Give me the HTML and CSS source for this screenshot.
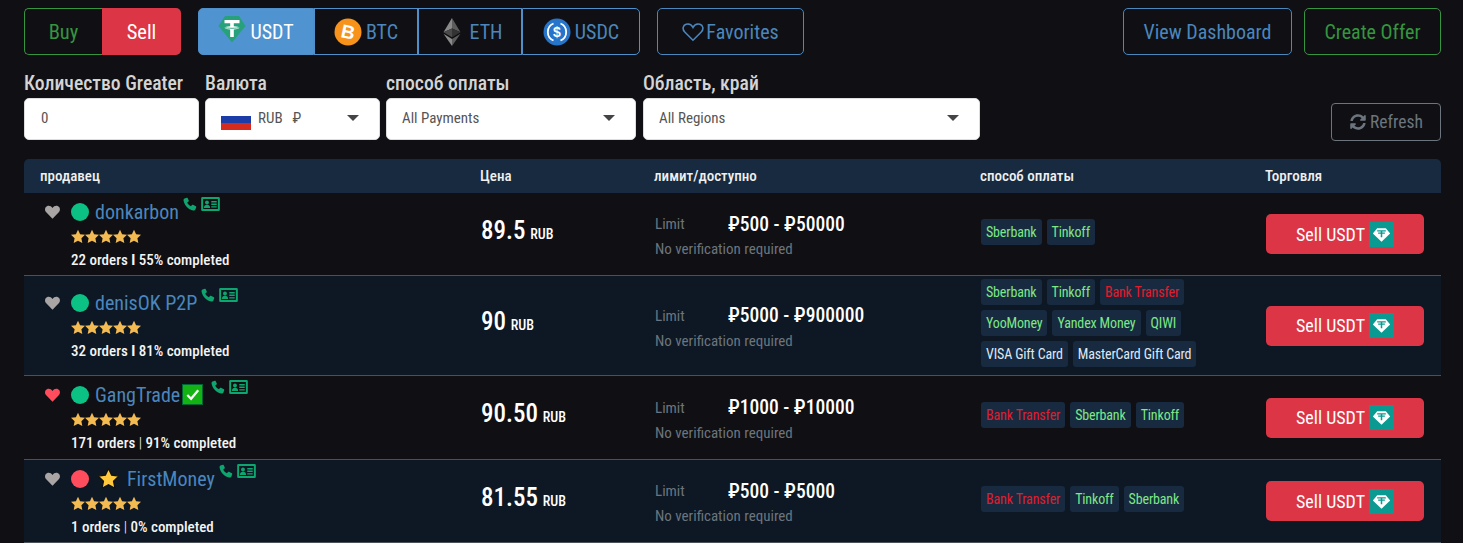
FILE: index.html
```html
<!DOCTYPE html>
<html lang="ru">
<head>
<meta charset="utf-8">
<title>P2P</title>
<link rel="stylesheet" href="styles.css">
</head>
<body>
<svg class="defs" width="0" height="0" aria-hidden="true">
  <defs>
    <symbol id="heart" viewBox="0 0 24 24"><path d="M12 22 2.600 12.400C-.2 9.500 0.500 4.800 3.700 3.300 6.500 2 9.800 2.800 12 6c2.200-3.200 5.500-4 8.300-2.700 3.200 1.500 3.900 6.200 1.100 9.100z"/></symbol>
    <symbol id="phone" viewBox="0 0 24 24"><path d="M6.600 1.200 2.700 2.600C1.100 3.200.7 4.800 1 6.600c1.800 8.600 8 14.800 16.300 16.500 1.700.3 3.200-.1 3.900-1.700l1.500-3.900c.2-.7 0-1.300-.6-1.600l-5-2.600c-.6-.3-1.200-.2-1.600.3l-2 2.400c-2.800-1.300-5-3.600-6.300-6.400l2.400-2c.5-.4.600-1 .3-1.600L7.900 1.800c-.3-.6-.8-.8-1.300-.6z"/></symbol>
    <symbol id="idcard" viewBox="0 0 24 18"><path fill-rule="evenodd" d="M1.500 0h21A1.500 1.500 0 0 1 24 1.500v15a1.500 1.500 0 0 1-1.500 1.500h-21A1.500 1.500 0 0 1 0 16.500v-15A1.500 1.500 0 0 1 1.500 0zM2.500 2.500v13h19v-13z"/><circle cx="7.500" cy="7" r="2.500"/><path d="M3.500 14c0-2.600 1.600-3.900 4-3.900s4 1.300 4 3.900zM13 5h7v2h-7zM13 8.500h7v1.800h-7zM13 11.800h7v1.800h-7z"/></symbol>
    <symbol id="star" viewBox="0 0 24 24"><path d="m12 .5 3.600 7.600 8.400 1.100-6.200 5.800 1.600 8.300L12 19.200l-7.400 4.100 1.600-8.300L0 9.200l8.400-1.100z"/></symbol>
    <symbol id="gem" viewBox="0 0 26 26"><rect width="26" height="26" fill="#0a9a92"/><path fill="#fff" d="M8.500 6.500h9L22 12l-9 8.500L4 12z"/><path fill="#0a9a92" d="M8.500 8.700h9v1.300h-3.700v1h2.700v1.200h-2.700v3.600h-1.600v-3.600H9.500V11h2.700v-1H8.500z"/></symbol>
  </defs>
</svg>

<main class="page">
  <div class="toolbar">
    <div class="side-switch">
      <button class="side buy">Buy</button>
      <button class="side sell">Sell</button>
    </div>
    <div class="coins">
      <button class="coin active">
        <svg class="coin-icon" viewBox="0 0 28 28"><path fill="#26a17b" d="M7 1h14l6.500 10L14 27.500.5 11z"/><path fill="#fff" d="M6.500 5h15v3.200h-5.700v3c3.200.2 5.600.8 5.600 1.600s-2.400 1.400-5.600 1.600V22h-3.600v-7.600c-3.200-.2-5.600-.8-5.600-1.600s2.400-1.400 5.600-1.600v-3H6.500z"/><path fill="none" stroke="#26a17b" stroke-width=".9" d="M6.500 12.300c2 1.300 13 1.300 15 0"/></svg>
        USDT
      </button>
      <button class="coin">
        <svg class="coin-icon" viewBox="0 0 28 28"><circle cx="14" cy="14" r="13.500" fill="#f7931a"/><text x="14" y="20.500" text-anchor="middle" class="btc-glyph" transform="rotate(12 14 14)">B</text></svg>
        BTC
      </button>
      <button class="coin">
        <svg class="coin-icon" viewBox="0 0 28 28"><path fill="#8a8a8a" d="M14 0v10.500L5.500 14.200z"/><path fill="#5c5c5c" d="M14 0v10.500l8.500 3.700z"/><path fill="#4a4a4a" d="M14 10.500v8.800l-8.500-5.100z"/><path fill="#333" d="M14 10.500v8.800l8.500-5.100z"/><path fill="#8a8a8a" d="M5.500 15.800 14 28v-7z"/><path fill="#5c5c5c" d="M22.500 15.800 14 28v-7z"/></svg>
        ETH
      </button>
      <button class="coin">
        <svg class="coin-icon" viewBox="0 0 28 28"><circle cx="14" cy="14" r="13.500" fill="#2775ca"/><path fill="none" stroke="#fff" stroke-width="1.800" d="M10.500 5.500a9.200 9.200 0 0 0 0 17M17.500 5.500a9.200 9.200 0 0 1 0 17"/><text x="14" y="19" text-anchor="middle" class="usdc-glyph">$</text></svg>
        USDC
      </button>
    </div>
    <button class="outline fav"><svg class="fav-heart" viewBox="0 0 24 24"><path d="M12 21 3 12C0 9 1 4.500 4.500 3.500 7.500 2.700 10.500 4 12 7c1.500-3 4.500-4.300 7.500-3.500C23 4.500 24 9 21 12z"/></svg>Favorites</button>
    <div class="spacer"></div>
    <button class="outline dash">View Dashboard</button>
    <button class="outline create">Create Offer</button>
  </div>

  <div class="filters">
    <label class="field f-amount"><span class="field-label">Количество Greater</span><span class="box"><span>0</span></span></label>
    <label class="field f-currency"><span class="field-label">Валюта</span><span class="box">
      <span class="flag"><i class="w"></i><i class="b"></i><i class="r"></i></span><span class="cur">RUB</span><span class="rub">₽</span><i class="caret"></i></span></label>
    <label class="field f-pay"><span class="field-label">способ оплаты</span><span class="box"><span>All Payments</span><i class="caret"></i></span></label>
    <label class="field f-region"><span class="field-label">Область, край</span><span class="box"><span>All Regions</span><i class="caret"></i></span></label>
    <div class="spacer"></div>
    <button class="refresh"><svg class="refresh-icon" viewBox="0 0 512 512"><path d="M370.700 133.300C339.500 104 298.900 88 255.800 88c-77.500.1-144.300 53.200-162.800 126.900-1.300 5.400-6.100 9.100-11.700 9.100H24.100c-7.500 0-13.200-6.800-11.800-14.200C33.900 94.900 134.800 8 256 8c66.400 0 126.800 26.100 171.300 68.700L463 41c15.100-15.100 41-4.400 41 17V192c0 13.300-10.700 24-24 24H345.900c-21.400 0-32.100-25.900-17-41zM32 296h134.100c21.400 0 32.100 25.900 17 41l-41.800 41.800c31.300 29.300 71.800 45.300 114.900 45.200 77.400-.1 144.300-53.100 162.800-126.800 1.300-5.400 6.100-9.100 11.700-9.100h57.300c7.500 0 13.200 6.800 11.800 14.200C478.100 417.100 377.200 504 256 504c-66.400 0-126.800-26.100-171.300-68.700L49 471c-15.100 15.100-41 4.400-41-17V320c0-13.300 10.700-24 24-24z"/></svg>Refresh</button>
  </div>

  <section class="table">
    <div class="row head">
      <div class="c-seller">продавец</div><div class="c-price">Цена</div><div class="c-limit">лимит/доступно</div><div class="c-pay">способ оплаты</div><div class="c-trade">Торговля</div>
    </div>

    <div class="row r1">
      <div class="c-seller">
        <div class="who"><svg class="like"><use href="#heart"/></svg><i class="dot on"></i><a class="name">donkarbon</a><span class="contact"><svg class="ph"><use href="#phone"/></svg><svg class="id"><use href="#idcard"/></svg></span></div>
        <div class="stars"><svg><use href="#star"/></svg><svg><use href="#star"/></svg><svg><use href="#star"/></svg><svg><use href="#star"/></svg><svg><use href="#star"/></svg></div>
        <div class="orders">22 orders <b>I</b> 55% completed</div>
      </div>
      <div class="c-price"><span class="amt">89.5</span> <span class="unit">RUB</span></div>
      <div class="c-limit"><div class="lim"><span class="lim-l">Limit</span><span class="lim-v">₽500 - ₽50000</span></div><div class="nover">No verification required</div></div>
      <div class="c-pay tags"><span class="tag g">Sberbank</span><span class="tag g">Tinkoff</span></div>
      <div class="c-trade"><button class="trade">Sell USDT<svg class="gem"><use href="#gem"/></svg></button></div>
    </div>

    <div class="row alt r2">
      <div class="c-seller">
        <div class="who"><svg class="like"><use href="#heart"/></svg><i class="dot on"></i><a class="name">denisOK P2P</a><span class="contact"><svg class="ph"><use href="#phone"/></svg><svg class="id"><use href="#idcard"/></svg></span></div>
        <div class="stars"><svg><use href="#star"/></svg><svg><use href="#star"/></svg><svg><use href="#star"/></svg><svg><use href="#star"/></svg><svg><use href="#star"/></svg></div>
        <div class="orders">32 orders <b>I</b> 81% completed</div>
      </div>
      <div class="c-price"><span class="amt">90</span> <span class="unit">RUB</span></div>
      <div class="c-limit"><div class="lim"><span class="lim-l">Limit</span><span class="lim-v">₽5000 - ₽900000</span></div><div class="nover">No verification required</div></div>
      <div class="c-pay tags"><span class="tag g">Sberbank</span><span class="tag g">Tinkoff</span><span class="tag red">Bank Transfer</span><span class="tag g">YooMoney</span><span class="tag g">Yandex Money</span><span class="tag g">QIWI</span><span class="tag w">VISA Gift Card</span><span class="tag w">MasterCard Gift Card</span></div>
      <div class="c-trade"><button class="trade">Sell USDT<svg class="gem"><use href="#gem"/></svg></button></div>
    </div>

    <div class="row r3">
      <div class="c-seller">
        <div class="who"><svg class="like fav-on"><use href="#heart"/></svg><i class="dot on"></i><a class="name">GangTrade</a><span class="check"><svg viewBox="0 0 20 20"><path fill="none" stroke="#fff" stroke-width="2.400" d="M4.500 10.500 8.500 14.500 16 5.500"/></svg></span><span class="contact c-check"><svg class="ph"><use href="#phone"/></svg><svg class="id"><use href="#idcard"/></svg></span></div>
        <div class="stars"><svg><use href="#star"/></svg><svg><use href="#star"/></svg><svg><use href="#star"/></svg><svg><use href="#star"/></svg><svg><use href="#star"/></svg></div>
        <div class="orders">171 orders <em>|</em> 91% completed</div>
      </div>
      <div class="c-price"><span class="amt">90.50</span> <span class="unit">RUB</span></div>
      <div class="c-limit"><div class="lim"><span class="lim-l">Limit</span><span class="lim-v">₽1000 - ₽10000</span></div><div class="nover">No verification required</div></div>
      <div class="c-pay tags"><span class="tag red">Bank Transfer</span><span class="tag g">Sberbank</span><span class="tag g">Tinkoff</span></div>
      <div class="c-trade"><button class="trade">Sell USDT<svg class="gem"><use href="#gem"/></svg></button></div>
    </div>

    <div class="row alt r4">
      <div class="c-seller">
        <div class="who"><svg class="like"><use href="#heart"/></svg><i class="dot off"></i><svg class="vip" viewBox="0 0 24 24"><use href="#star"/></svg><a class="name">FirstMoney</a><span class="contact"><svg class="ph"><use href="#phone"/></svg><svg class="id"><use href="#idcard"/></svg></span></div>
        <div class="stars"><svg><use href="#star"/></svg><svg><use href="#star"/></svg><svg><use href="#star"/></svg><svg><use href="#star"/></svg><svg><use href="#star"/></svg></div>
        <div class="orders">1 orders <em>|</em> 0% completed</div>
      </div>
      <div class="c-price"><span class="amt">81.55</span> <span class="unit">RUB</span></div>
      <div class="c-limit"><div class="lim"><span class="lim-l">Limit</span><span class="lim-v">₽500 - ₽5000</span></div><div class="nover">No verification required</div></div>
      <div class="c-pay tags"><span class="tag red">Bank Transfer</span><span class="tag g">Tinkoff</span><span class="tag g">Sberbank</span></div>
      <div class="c-trade"><button class="trade">Sell USDT<svg class="gem"><use href="#gem"/></svg></button></div>
    </div>
  </section>
</main>
</body>
</html>
```

FILE: styles.css
```css
* { box-sizing: border-box; }
html, body { margin: 0; height: 100%; overflow: hidden; }
body {
  background: #101014;
  color: #fff;
  font-family: Roboto, "Liberation Sans", sans-serif;
  font-stretch: 75%;
}
.defs { position: absolute; }
button { font: inherit; font-stretch: 75%; background: none; cursor: pointer; }
.page { padding: 8px 22px 0 24px; }
.spacer { flex: 1; }

.toolbar { display: flex; height: 47px; }
.side-switch { display: flex; width: 157px; }
.side { font-size: 20.500px; padding: 0; }
.buy { width: 78px; color: #36953f; border: 1px solid #36953f; border-right: 0; border-radius: 5px 0 0 5px; }
.sell { width: 79px; color: #fff; border: 0; background: #dc3545; border-radius: 0 5px 5px 0; }
.coins { display: flex; margin-left: 17px; }
.coin {
  display: flex; align-items: center; justify-content: center; gap: 4px;
  height: 47px; width: 104px; color: #4b86bd; font-size: 20px; padding: 0;
  border: 1px solid #4f8fca;
}
.coin:first-child { width: 116px; border-radius: 5px 0 0 5px; }
.coin:last-child { width: 118px; border-radius: 0 5px 5px 0; }
.coin.active { background: #4f93d0; color: #fff; }
.coin-icon { width: 28px; height: 28px; flex: none; }
.coin.active .coin-icon { margin-top: -5px; }
.btc-glyph { font: 700 19px "Liberation Sans", sans-serif; fill: #fff; }
.usdc-glyph { font: 700 14px "Liberation Sans", sans-serif; fill: #fff; }
.outline { height: 47px; font-size: 20px; border-radius: 5px; padding: 0; border: 1px solid #4b86bd; color: #4b86bd; }
.fav { display: flex; align-items: center; justify-content: center; margin-left: 17px; width: 147px; gap: 2px; }
.fav-heart { width: 22px; height: 22px; fill: none; stroke: #4b86bd; stroke-width: 1.700; }
.dash { width: 169px; }
.create { width: 137px; margin-left: 12px; color: #36953f; border-color: #36953f; }

.filters { display: flex; margin-top: 16px; }
.field { display: flex; flex-direction: column; margin-right: 6px; }
.field-label { font-size: 19.700px; font-weight: 500; line-height: 24px; color: #d4d4d4; height: 27px; padding-top: 1px; }
.box {
  display: flex; align-items: center; height: 42px; background: #fff;
  border: 1px solid #ddd; border-radius: 5px; padding: 0 15px 2px;
  color: #555; font-size: 15px;
}
.f-amount { width: 175px; }
.f-amount .box { padding-left: 16px; }
.f-currency { width: 175px; }
.f-pay { width: 250px; margin-right: 7px; }
.f-region { width: 337px; margin-right: 0; }
.caret { width: 0; height: 0; border-left: 6.500px solid transparent; border-right: 6.500px solid transparent; border-top: 6.500px solid #444; margin-left: auto; margin-right: 5px; }
.flag { display: flex; flex-direction: column; width: 30px; height: 21px; margin-top: 2px; }
.flag i { flex: 1; display: block; }
.flag .w { background: #fff; }
.flag .b { background: #1c3da8; }
.flag .r { background: #d52b1e; }
.cur { margin-left: 7px; }
.rub { margin-left: 10px; }
.refresh {
  display: flex; align-items: center; justify-content: center; gap: 4px;
  margin-top: 32px; width: 110px; height: 38px; border: 1px solid #6c757d; border-radius: 4px;
  color: #6c757d; font-size: 17.500px; padding: 0 0 0 1px;
}
.refresh-icon { width: 16px; height: 16px; fill: #6c757d; }

.table { margin-top: 18px; }
.row { display: flex; align-items: center; border-bottom: 1px solid #4c5058; background: #101014; }
.row.alt { background: #0d1824; }
.row > div { flex: none; }
.c-seller { width: 456px; padding-left: 16px; }
.c-price { width: 174px; padding-left: 1px; margin-top: -8px; }
.c-limit { width: 326px; padding: 4px 0 0 1px; }
.c-pay { width: 285px; }
.c-trade { width: 176px; padding-left: 1px; }

.head { height: 34px; background: #172a40; border: 0; border-radius: 5px 5px 0 0; font-size: 15px; font-weight: 500; color: #f0f0f0; }
.head .c-price, .head .c-limit, .head .c-trade { padding: 0; margin: 0; }
.r1 { height: 83px; }
.r2 { height: 100px; }
.r3 { height: 84px; }
.r4 { height: 83px; }

.who { display: flex; align-items: center; height: 24px; margin-left: 4px; }
.like { width: 17px; height: 16px; fill: #a9a5a5; flex: none; margin-right: 10px; }
.like.fav-on { fill: #ff4d5e; }
.dot { width: 18px; height: 18px; border-radius: 50%; flex: none; margin-right: 6px; }
.dot.on { background: #0cc184; }
.dot.off { background: #ff4d5e; }
.name { font-size: 20px; color: #4b86bd; }
.contact { display: flex; align-items: flex-start; gap: 4px; align-self: flex-start; margin-left: 4px; margin-top: -3px; }
.ph { width: 14px; height: 14px; fill: #0fa56f; }
.id { width: 19px; height: 14px; fill: #0fa56f; }
.contact.c-check { margin-left: 8px; }
.check { width: 21px; height: 21px; margin: -1px 0 0 2px; background: #12b312; border: 1px solid #063; display: flex; }
.check svg { width: 100%; height: 100%; }
.vip { width: 21px; height: 21px; fill: #ffc83d; stroke: #111; stroke-width: 1.500; margin: 0 8px 0 3px; overflow: visible; }
.stars { display: flex; margin: 5px 0 0 31px; height: 15px; }
.stars svg { width: 14px; height: 15px; fill: #f4bb52; }
.orders { margin: 7px 0 0 31px; font-size: 15px; font-weight: 500; line-height: 18px; color: #f4f4f4; }
.orders b { font-weight: 700; }
.orders em { font-style: normal; font-weight: 300; }

.amt { font-size: 25px; font-weight: 500; }
.unit { font-size: 14px; font-weight: 500; margin-left: 1px; }
.lim { display: flex; align-items: center; line-height: 25px; }
.lim-l { width: 73px; font-size: 15px; color: #6c757d; padding-top: 1px; }
.lim-v { font-size: 19.500px; font-weight: 500; }
.nover { font-size: 15px; line-height: 24px; color: #6c757d; }

.tags { display: flex; flex-wrap: wrap; column-gap: 5px; padding-left: 1px; padding-right: 30px; }
.tag { display: block; background: #172a40; border-radius: 3px; padding: 0 5px; height: 26px; margin-bottom: 5px; line-height: 26px; font-size: 14px; letter-spacing: -.15px; }
.tag.g { color: #7ee787; }
.tag.red { color: #e11d2c; }
.tag.w { color: #dfe8f5; }

.trade {
  display: flex; align-items: center; justify-content: center; gap: 4px;
  width: 158px; height: 40px; border: 0; border-radius: 5px; background: #dc3545; color: #fff; font-size: 18px; padding: 0;
}
.gem { width: 25px; height: 25px; flex: none; }
```
